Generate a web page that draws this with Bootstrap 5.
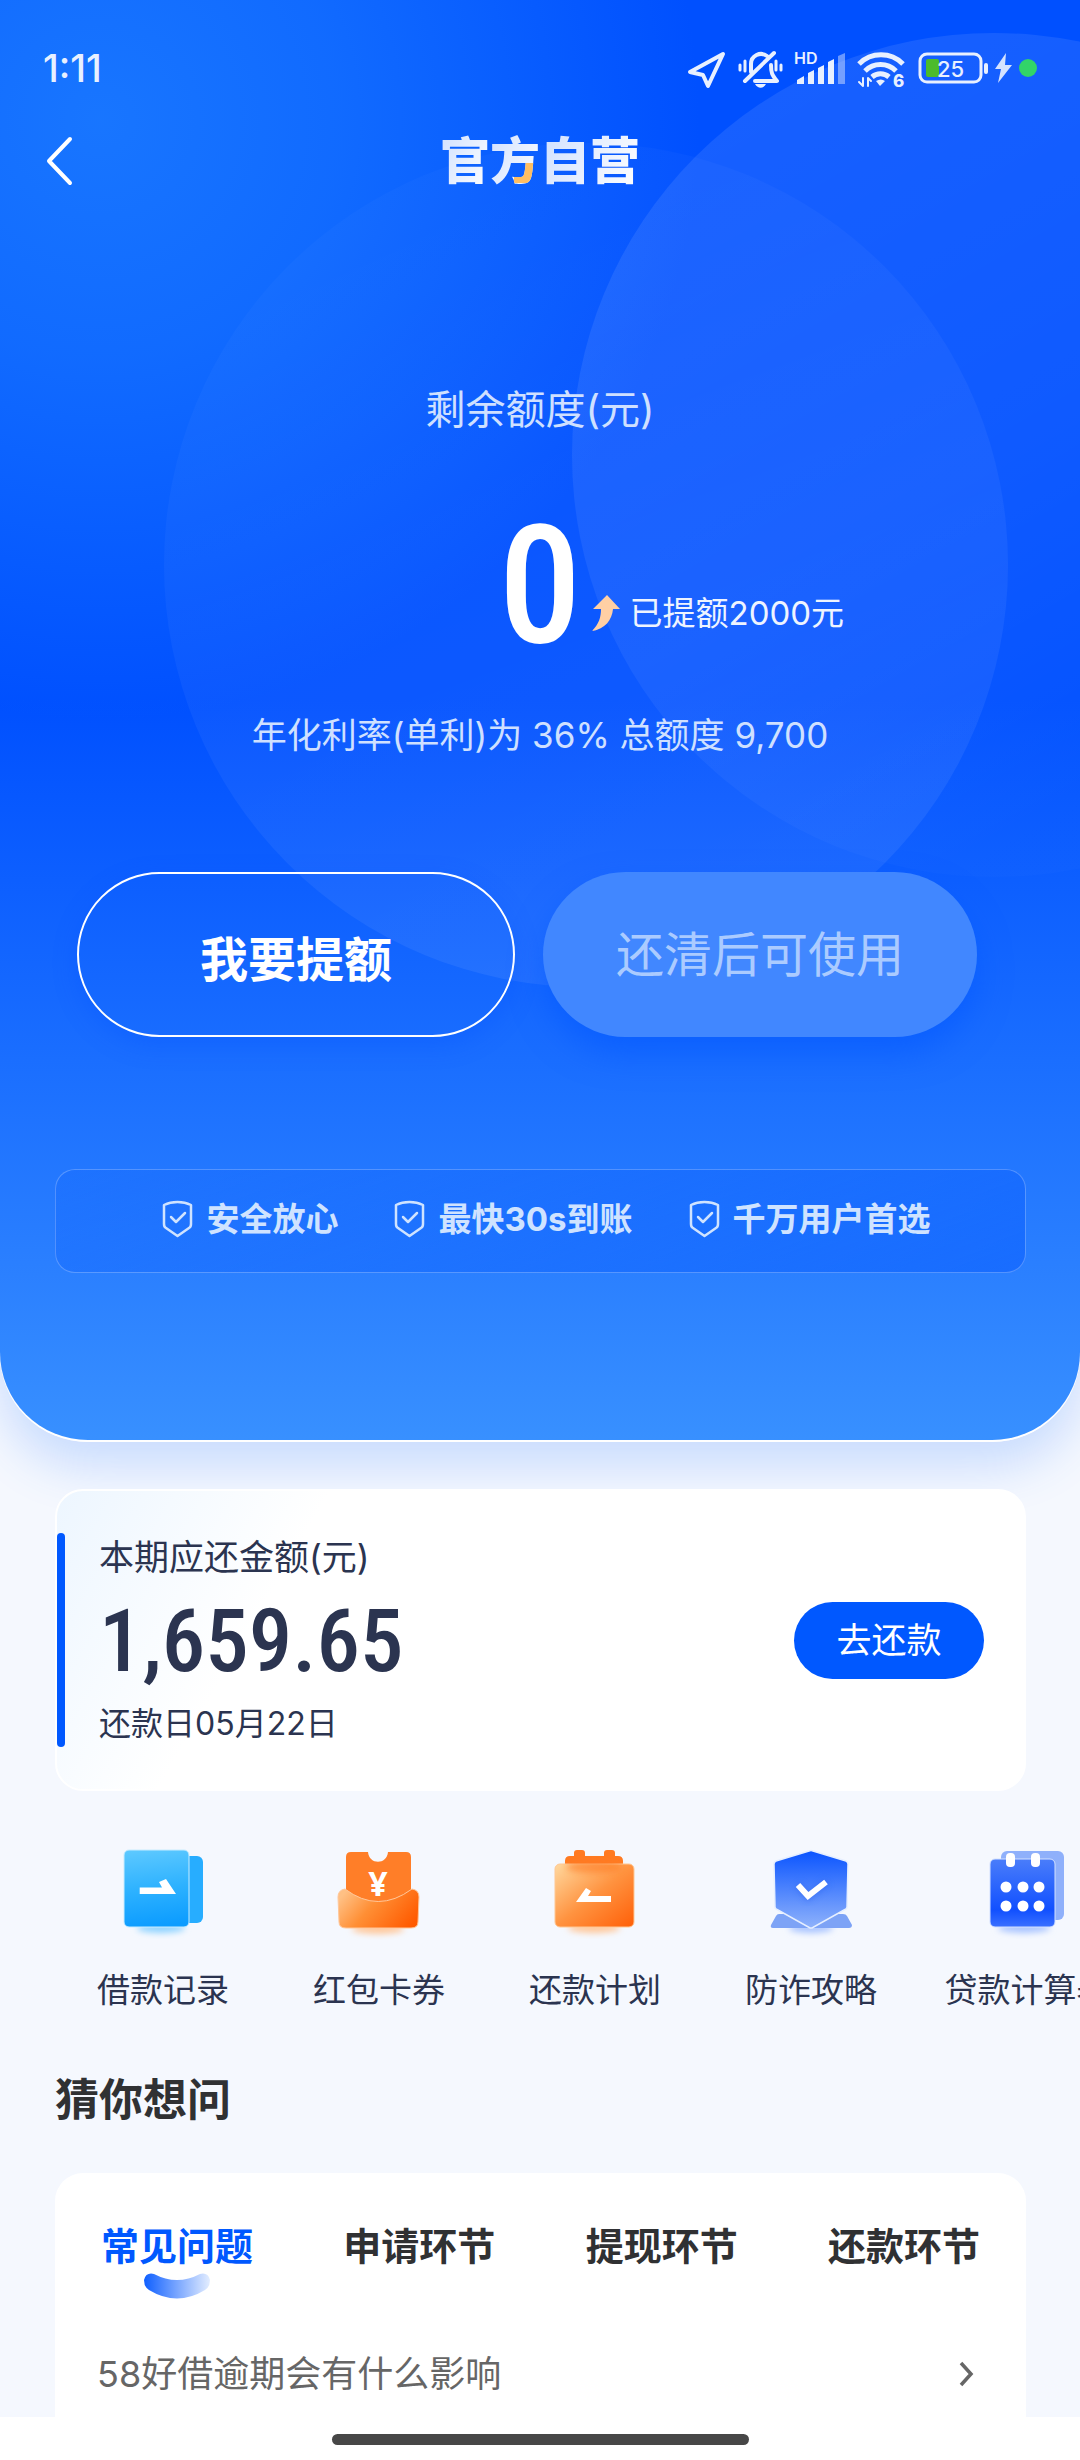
<!DOCTYPE html>
<html lang="zh-CN">
<head>
<meta charset="utf-8">
<meta name="viewport" content="width=device-width, initial-scale=1">
<title>官方自营</title>
<link rel="stylesheet" href="https://cdn.jsdelivr.net/npm/bootstrap@5.3.0/dist/css/bootstrap.min.css">
<style>
  body { font-family: Inter, "Noto Sans CJK SC", sans-serif; background: #f5f8fe; color: #2b3450; overflow-x: hidden; }
  a { color: inherit; text-decoration: none; }
  svg { display: block; flex: none; }
  .hero {
    position: relative; overflow: hidden; z-index: 0; padding-bottom: 167px;
    border-radius: 0 0 88px 88px; color: #fff;
    background:
      radial-gradient(circle 600px at 100px 120px, rgba(32, 130, 255, .75) 0, rgba(28, 124, 255, .6) 40%, rgba(0, 80, 255, 0) 100%),
      linear-gradient(#0050ff 0, #0050ff 700px, #1a6eff 1060px, #2b80ff 1275px, #3890ff 1440px);
  }
  .hero::before, .hero::after { content: ""; position: absolute; z-index: -1; width: 844px; height: 844px; border-radius: 50%; }
  .hero::before { left: 164px; top: 143px; background: linear-gradient(160deg, rgba(255, 255, 255, .01), rgba(255, 255, 255, .05) 60%, rgba(255, 255, 255, .08)); }
  .hero::after { left: 572px; top: 33px; background: linear-gradient(150deg, rgba(255, 255, 255, .1), rgba(255, 255, 255, .06) 50%, rgba(255, 255, 255, .01) 80%); }
  .hero-shadow { border-radius: 0 0 88px 88px; border-bottom: 2px solid #fff; box-shadow: 0 24px 48px rgba(60, 130, 255, .24); }
  .status { padding: 40px 43px 0; height: 96px; color: #e8f0ff; }
  .clock { font-size: 38px; line-height: 56px; font-weight: 500; }
  .topbar { height: 130px; display: grid; grid-template-columns: 1fr auto 1fr; align-items: center; padding: 0 40px; }
  .brand { font-size: 50px; line-height: 60px; font-weight: 900; margin: 0; }
  .brand span { color: transparent; -webkit-background-clip: text; background-clip: text; background-image: linear-gradient(120deg, #cfe0ff, #fff); }
  .brand .accent { background-image: linear-gradient(#ffbe62, #ffbe62), linear-gradient(120deg, #cfe0ff, #fff); background-repeat: no-repeat; background-size: 26px 20px, 100% 100%; background-position: right bottom 8px, 0 0; }
  .quota-label { font-size: 40px; line-height: 60px; margin-top: 154px; color: #cfe0ff; }
  .quota { display: grid; grid-template-columns: 1fr auto 1fr; height: 160px; margin-top: 65px; }
  .quota-num { grid-column: 2; font: 500 166px/162px "Roboto Condensed", Roboto, sans-serif; }
  .raised { font-size: 33px; line-height: 48px; gap: 10px; padding: 84px 0 0 10px; align-self: start; color: #eef4ff; }
  .rate { font-size: 35px; line-height: 50px; margin-top: 45px; color: #cfe0ff; }
  .actions { margin-top: 112px; padding: 0 103px 0 77px; gap: 28px; }
  .actions .btn { flex: 1; height: 165px; border-radius: 83px; font-size: 48px; }
  .actions .btn-raise, .actions .btn-raise:hover { border: 2px solid #fff; color: #fff; font-weight: 700; padding-top: 16px; box-shadow: 0 8px 24px rgba(0, 80, 255, .3); }
  .actions .btn-used:disabled { background: #4187ff; color: #abcbff; border: 0; opacity: 1; box-shadow: 0 16px 32px rgba(0, 86, 255, .55); }
  .trust { margin: 132px 54px 0 55px; height: 104px; border: 1px solid rgba(255, 255, 255, .25); border-radius: 20px; background: linear-gradient(160deg, rgba(20, 104, 255, .3), rgba(20, 104, 255, .8)); gap: 56px; font-size: 33px; font-weight: 700; color: #cfe3ff; padding: 0 0 4px 12px; }
  .trust div { gap: 13px; line-height: 48px; }
  .bill { position: relative; margin: 47px 54px 0 55px; padding: 44px 40px 44px 42px; border: 2px solid #fff; border-radius: 28px; background: linear-gradient(120deg, #edf6ff, #fff 24%); }
  .bill::before { content: ""; position: absolute; left: 0; top: 42px; bottom: 42px; width: 8px; border-radius: 4px; background: #0058ff; }
  .bill-label { font-size: 35px; line-height: 44px; }
  .bill-sum { font: 500 87px/124px "Roboto Condensed", Roboto, sans-serif; }
  .bill-date { font-size: 32px; line-height: 42px; }
  .btn-pay, .btn-pay:hover { background: #0058ff; color: #fff; width: 190px; height: 77px; border: 0; border-radius: 39px; font-size: 35px; padding: 0; }
  .tools { padding: 49px 0 0 55px; overflow: hidden; }
  .tool { flex: 0 0 216px; font-size: 33px; line-height: 50px; gap: 25px; white-space: nowrap; }
  .faq-title { font-size: 44px; line-height: 60px; font-weight: 700; color: #303133; margin: 55px 55px 0; }
  .faq { margin: 43px 54px 0 55px; padding: 46px 42px 16px; background: #fff; border-radius: 28px 28px 0 0; }
  .faq-tab { border: 0; background: none; padding: 0; font-size: 38px; line-height: 54px; font-weight: 700; color: #303133; height: 80px; }
  .faq-tab.active { color: #0058ff; }
  .faq-row { font-size: 36px; line-height: 54px; color: #666; margin-top: 48px; padding-right: 9px; }
  .home { height: 44px; background: #fff; }
  .home span { display: block; width: 417px; height: 11px; border-radius: 6px; background: #474747; margin-top: 17px; }
</style>
</head>
<body>
<div class="hero-shadow">
<header class="hero">
  <div class="status d-flex justify-content-between">
    <span class="clock">1:11</span>
    <svg width="352" height="56" viewBox="685 40 352 56" fill="none" stroke="#e8f0ff" stroke-linecap="round" stroke-linejoin="round">
      <!-- location -->
      <path d="M690 72 723 54 708 86 703 75Z" stroke-width="4"/>
      <!-- muted bell -->
      <g stroke-width="4">
        <path d="M751 72v-8a10 10 0 0 1 16-8M771 65c0 8 1 10 6 16h-22M745 81 774 53"/>
        <path d="M740 65v5M745 61v10M776 61v9M781 65v5" stroke-width="3"/>
      </g>
      <path d="M755 84h11c-3 5-8 5-11 0z" fill="#e8f0ff" stroke="none"/>
      <!-- signal -->
      <text x="794" y="64" font-size="16" font-weight="600" fill="#e8f0ff" stroke="none">HD</text>
      <g fill="#e8f0ff" stroke="none">
        <path d="M797 84v-4l7-4v8zM808 84V73l6-3v14zM818 84V68l6-3v19zM828 84V62l6-3v25z"/>
        <path d="M838 84V56l7-3v31z" opacity=".45"/>
      </g>
      <!-- wifi 6 -->
      <g stroke-width="5" stroke-linecap="butt">
        <path d="M859 64a31 31 0 0 1 44 0M865 71a22 22 0 0 1 31 0M872 77a13 13 0 0 1 17 0"/>
      </g>
      <path d="M876 81q5-3 9 0l-5 5z" fill="#e8f0ff" stroke="none"/>
      <path d="M863 78v8l-4-4M868 86v-8l3 3" stroke-width="2"/>
      <text x="893" y="87" font-size="17" font-weight="800" fill="#e8f0ff" stroke="none">6</text>
      <!-- battery -->
      <rect x="920" y="54" width="61" height="28" rx="7" stroke-width="3"/>
      <rect x="926" y="59" width="13" height="18" rx="2" fill="#4cbb2c" stroke="none"/>
      <path d="M986 65v7" stroke-width="4"/>
      <text x="937" y="77" font-size="22" font-weight="500" fill="#e8f0ff" stroke="none">25</text>
      <path d="M1006 53 995 69h6l-3 14 14-18h-7z" fill="#d5e3ff" stroke="none"/>
      <circle cx="1028" cy="68" r="9" fill="#32d469" stroke="none"/>
    </svg>
  </div>
  <nav class="topbar">
    <a href="#" aria-label="返回"><svg width="40" height="50" viewBox="0 0 40 50" fill="none" stroke="#fff" stroke-width="4" stroke-linecap="round" stroke-linejoin="round"><path d="M30 3 9 25l21 22"/></svg></a>
    <h1 class="brand"><span>官</span><span class="accent">方</span><span>自营</span></h1>
  </nav>
  <div class="quota-label text-center">剩余额度(元)</div>
  <div class="quota">
    <div class="quota-num">0</div>
    <div class="raised d-flex align-items-center">
      <svg width="28" height="36" viewBox="0 0 28 36"><path d="M15 0 28 14h-7C20 25 13 34 0 36 7 29 9 22 9 14H1z" fill="#ffcfa4"/></svg>
      <span>已提额2000元</span>
    </div>
  </div>
  <div class="rate text-center">年化利率(单利)为 36% 总额度 9,700</div>
  <div class="actions d-flex">
    <button type="button" class="btn btn-raise">我要提额</button>
    <button type="button" class="btn btn-used" disabled>还清后可使用</button>
  </div>
  <div class="trust d-flex justify-content-center align-items-center">
    <div class="d-flex align-items-center"><svg width="31" height="38" viewBox="0 0 31 38" fill="none" stroke="#cfe3ff" stroke-width="2.5" stroke-linecap="round" stroke-linejoin="round"><path d="M15.500 2C20 2 25 3 29 5v19q0 3-2 4L15.500 36 4 28q-2-1-2-4V5C6 3 11 2 15.500 2zM9 17l5 5 9-9"/></svg><span>安全放心</span></div>
    <div class="d-flex align-items-center"><svg width="31" height="38" viewBox="0 0 31 38" fill="none" stroke="#cfe3ff" stroke-width="2.5" stroke-linecap="round" stroke-linejoin="round"><path d="M15.500 2C20 2 25 3 29 5v19q0 3-2 4L15.500 36 4 28q-2-1-2-4V5C6 3 11 2 15.500 2zM9 17l5 5 9-9"/></svg><span>最快30s到账</span></div>
    <div class="d-flex align-items-center"><svg width="31" height="38" viewBox="0 0 31 38" fill="none" stroke="#cfe3ff" stroke-width="2.5" stroke-linecap="round" stroke-linejoin="round"><path d="M15.500 2C20 2 25 3 29 5v19q0 3-2 4L15.500 36 4 28q-2-1-2-4V5C6 3 11 2 15.500 2zM9 17l5 5 9-9"/></svg><span>千万用户首选</span></div>
  </div>
</header>
</div>

<main>
  <section class="bill d-flex justify-content-between align-items-center">
    <div>
      <div class="bill-label">本期应还金额(元)</div>
      <div class="bill-sum">1,659.65</div>
      <div class="bill-date">还款日05月22日</div>
    </div>
    <button type="button" class="btn btn-pay">去还款</button>
  </section>

  <nav class="tools d-flex">
    <a href="#" class="tool d-flex flex-column align-items-center">
      <svg width="100" height="100" viewBox="0 0 100 100">
        <defs>
          <linearGradient id="sky" x1=".3" y1="0" x2=".4" y2="1"><stop offset="0" stop-color="#5cc8ff"/><stop offset=".5" stop-color="#2eb2ff"/><stop offset="1" stop-color="#0c9cff"/></linearGradient>
          <linearGradient id="pocket" x1="0" y1=".3" x2="1" y2=".7"><stop offset="0" stop-color="#ffc084"/><stop offset=".4" stop-color="#ff8f35"/><stop offset="1" stop-color="#ff5a00"/></linearGradient>
          <linearGradient id="plan" x1="0" y1="0" x2="1" y2="1"><stop offset="0" stop-color="#ffd9a0"/><stop offset=".5" stop-color="#ff9340"/><stop offset="1" stop-color="#ff5f08"/></linearGradient>
          <linearGradient id="guard" x1="0" y1="0" x2="0" y2="1"><stop offset="0" stop-color="#0a54ff"/><stop offset="1" stop-color="#8fb2fb"/></linearGradient>
          <linearGradient id="calc" x1="0" y1="0" x2="0" y2="1"><stop offset="0" stop-color="#4a7dfa"/><stop offset=".75" stop-color="#1150ff"/><stop offset="1" stop-color="#3a70ff"/></linearGradient>
          <filter id="soft" x="-30%" y="-60%" width="160%" height="220%"><feGaussianBlur stdDeviation="3"/></filter>
        </defs>
        <ellipse cx="48" cy="88" rx="24" ry="5" fill="#8fd3ff" filter="url(#soft)"/>
        <rect x="60" y="16" width="30" height="67" rx="6" fill="#27adff"/>
        <rect x="11" y="10" width="65" height="77" rx="5" fill="url(#sky)" stroke="#c8ecff"/>
        <path d="M26.700 47.500H49l-3-5.500 7-3 10 15H26.700z" fill="#fff"/>
      </svg>
      <span>借款记录</span>
    </a>
    <a href="#" class="tool d-flex flex-column align-items-center">
      <svg width="100" height="100" viewBox="0 0 100 100">
        <ellipse cx="49" cy="89" rx="26" ry="5" fill="#ffc79a" filter="url(#soft)"/>
        <path d="M22 12h17c1 13 19 13 20 0h18q5 0 5 5v55H17V17q0-5 5-5z" fill="#ff7e28"/>
        <path d="M16 49q33 25 67 0 7 1 7 8l-1 25q0 6-7 6H17q-7 0-7-6L9 57q0-7 7-8z" fill="url(#pocket)" stroke="#ffc79a"/>
        <text x="49" y="56" text-anchor="middle" font-size="34" font-weight="700" fill="#fff" font-family="Noto Sans">¥</text>
      </svg>
      <span>红包卡券</span>
    </a>
    <a href="#" class="tool d-flex flex-column align-items-center">
      <svg width="100" height="100" viewBox="0 0 100 100">
        <ellipse cx="49" cy="88" rx="26" ry="5" fill="#ffc79a" filter="url(#soft)"/>
        <path d="M20 40V21q0-5 5-5h4v-3q0-3 3-3h5q3 0 3 3v3h19v-3q0-3 3-3h5q3 0 3 3v3h3q5 0 5 5v19z" fill="#ff7a22"/>
        <rect x="10" y="24" width="79" height="63" rx="5" fill="url(#plan)" stroke="#ffc894"/>
        <ellipse cx="49" cy="27" rx="28" ry="6" fill="#ff7a22" opacity=".6" filter="url(#soft)"/>
        <path d="M31 62 41 48l5 3-3 5h23v6z" fill="#fff"/>
      </svg>
      <span>还款计划</span>
    </a>
    <a href="#" class="tool d-flex flex-column align-items-center">
      <svg width="100" height="100" viewBox="0 0 100 100">
        <ellipse cx="50" cy="88" rx="22" ry="5" fill="#a9c4ff" filter="url(#soft)"/>
        <path d="M18 74h64q3 0 4 2l5 9q0 3-3 3H12q-3 0-2-3l5-9q1-2 3-2z" fill="#7da3f6"/>
        <path d="M48 11q2-1 4 0l33 10q2 1 2 3l-1 43q0 2-3 3L51 88h-2L17 70q-3-1-3-3l-1-43q0-2 2-3z" fill="url(#guard)" stroke="#e6efff" stroke-width="1.500"/>
        <path d="M37 45l10 12 19-15" fill="none" stroke="#2a62ee" stroke-width="7" opacity=".5" filter="url(#soft)"/>
        <path d="M37 45l10 11 18-14" fill="none" stroke="#fff" stroke-width="6"/>
      </svg>
      <span>防诈攻略</span>
    </a>
    <a href="#" class="tool d-flex flex-column align-items-center">
      <svg width="100" height="100" viewBox="0 0 100 100">
        <ellipse cx="47" cy="88" rx="26" ry="5" fill="#a9c4ff" filter="url(#soft)"/>
        <rect x="24" y="11" width="63" height="69" rx="6" fill="#8fb0fb"/>
        <rect x="13" y="19" width="65" height="68" rx="5" fill="url(#calc)" stroke="#d3e1ff"/>
        <g fill="#fff"><rect x="29" y="13" width="9" height="14" rx="4"/><rect x="54" y="13" width="9" height="14" rx="4"/>
        <circle cx="29" cy="47" r="5.500"/><circle cx="46" cy="47" r="5.500"/><circle cx="62" cy="47" r="5.500"/><circle cx="29" cy="66" r="5.500"/><circle cx="46" cy="66" r="5.500"/><circle cx="62" cy="66" r="5.500"/></g>
      </svg>
      <span>贷款计算器</span>
    </a>
  </nav>

  <h2 class="faq-title">猜你想问</h2>
  <section class="faq">
    <div class="d-flex justify-content-between px-1">
      <button type="button" class="faq-tab active d-flex flex-column align-items-center">常见问题
        <svg width="66" height="26" viewBox="0 0 66 26"><defs><linearGradient id="smile"><stop offset="0" stop-color="#0f5fff"/><stop offset="1" stop-color="#e3edff"/></linearGradient></defs><path d="M10 1Q33 13 56 1q8-2 10 6 0 7-5 10-28 17-56 0Q0 14 0 7 2-1 10 1z" fill="url(#smile)"/></svg>
      </button>
      <button type="button" class="faq-tab d-flex">申请环节</button>
      <button type="button" class="faq-tab d-flex">提现环节</button>
      <button type="button" class="faq-tab d-flex">还款环节</button>
    </div>
    <a href="#" class="faq-row d-flex justify-content-between align-items-center">
      <span>58好借逾期会有什么影响</span>
      <svg width="16" height="26" viewBox="0 0 16 26" fill="none" stroke="#666" stroke-width="3.500"><path d="M2 2l10 11L2 24"/></svg>
    </a>
  </section>
</main>
<footer class="home d-flex justify-content-center"><span></span></footer>
<script src="https://cdn.jsdelivr.net/npm/bootstrap@5.3.0/dist/js/bootstrap.bundle.min.js"></script>
</body>
</html>
